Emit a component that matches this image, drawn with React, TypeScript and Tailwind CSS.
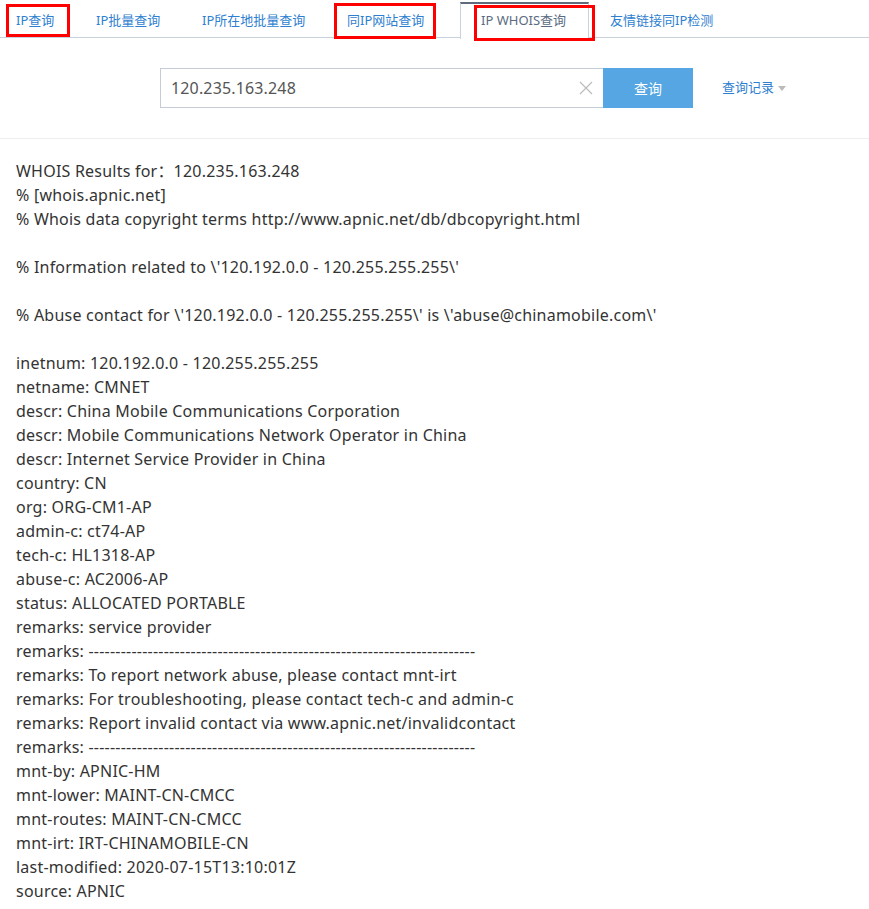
import { useState } from "react";

const tabs = [
  { label: "IP查询", w: "w-[80px]", pl: "pl-4" },
  { label: "IP批量查询", w: "w-[106px]", pl: "pl-4" },
  { label: "IP所在地批量查询", w: "w-[145px]", pl: "pl-4" },
  { label: "同IP网站查询", w: "w-[129px]", pl: "pl-4" },
  { label: "IP WHOIS查询", w: "w-[129px]", pl: "pl-[20px]", active: true },
  { label: "友情链接同IP检测", w: "w-[140px]", pl: "pl-[21px]" },
];

const dashes = "-".repeat(72);

const whoisLines = [
  "WHOIS Results for：120.235.163.248",
  "% [whois.apnic.net]",
  "% Whois data copyright terms http://www.apnic.net/db/dbcopyright.html",
  "",
  "% Information related to \\'120.192.0.0 - 120.255.255.255\\'",
  "",
  "% Abuse contact for \\'120.192.0.0 - 120.255.255.255\\' is \\'abuse@chinamobile.com\\'",
  "",
  "inetnum: 120.192.0.0 - 120.255.255.255",
  "netname: CMNET",
  "descr: China Mobile Communications Corporation",
  "descr: Mobile Communications Network Operator in China",
  "descr: Internet Service Provider in China",
  "country: CN",
  "org: ORG-CM1-AP",
  "admin-c: ct74-AP",
  "tech-c: HL1318-AP",
  "abuse-c: AC2006-AP",
  "status: ALLOCATED PORTABLE",
  "remarks: service provider",
  `remarks: ${dashes}`,
  "remarks: To report network abuse, please contact mnt-irt",
  "remarks: For troubleshooting, please contact tech-c and admin-c",
  "remarks: Report invalid contact via www.apnic.net/invalidcontact",
  `remarks: ${dashes}`,
  "mnt-by: APNIC-HM",
  "mnt-lower: MAINT-CN-CMCC",
  "mnt-routes: MAINT-CN-CMCC",
  "mnt-irt: IRT-CHINAMOBILE-CN",
  "last-modified: 2020-07-15T13:10:01Z",
  "source: APNIC",
];

export default function App() {
  const [ip, setIp] = useState("120.235.163.248");

  return (
    <div className="relative min-h-screen bg-white font-['Noto_Sans','Noto_Sans_CJK_SC',sans-serif] text-[#333]">
      {/* Tabs */}
      <div className="flex h-[38px] border-b border-[#c9d1dc]">
        {tabs.map((t) => (
          <a
            key={t.label}
            href="#"
            className={`${t.w} ${t.pl} flex items-center text-[13px] ${
              t.active
                ? "mt-[2px] h-[37px] border-x border-t-2 border-x-[#c9d1dc] border-t-[#5f6b7c] bg-white pb-[1px] text-[#5b6b82]"
                : "h-[38px] pt-[3px] text-[#2f7fd0]"
            }`}
          >
            {t.label}
          </a>
        ))}
      </div>

      {/* Highlight markers */}
      <div className="pointer-events-none absolute left-[6px] top-[4px] h-[33px] w-[64px] border-[3px] border-[#f00]" />
      <div className="pointer-events-none absolute left-[334px] top-[3px] h-[36px] w-[102px] border-[3px] border-[#f00]" />
      <div className="pointer-events-none absolute left-[474px] top-[5px] h-[36px] w-[121px] border-[3px] border-[#f00]" />

      {/* Search */}
      <div className="flex h-[101px] items-start border-b border-[#eee] pl-[160px] pt-[30px]">
        <div className="flex h-[40px] w-[443px] items-center border border-r-0 border-[#c5ccd8] bg-white">
          <input
            value={ip}
            onChange={(e) => setIp(e.target.value)}
            className="h-full flex-1 bg-transparent pl-[10px] text-[16px] tracking-[0.15px] text-[#555] outline-none"
          />
          <button onClick={() => setIp("")} className="mr-[10px] text-[#bbb]" aria-label="clear">
            <svg width="14" height="14" viewBox="0 0 14 14" stroke="currentColor" strokeWidth="1.2">
              <path d="M1 1l12 12M13 1L1 13" />
            </svg>
          </button>
        </div>
        <button className="h-[40px] w-[90px] bg-[#55a6e2] text-[14px] text-white">查询</button>
        <a href="#" className="ml-[29px] flex h-[40px] items-center text-[13px] text-[#2f7fd0]">
          查询记录
          <span className="ml-[4px] mt-[1px] h-0 w-0 border-x-[4px] border-t-[5px] border-x-transparent border-t-[#bbb]" />
        </a>
      </div>

      {/* Results */}
      <div className="pl-4 pt-5 text-[16px] leading-[24px] tracking-[0.22px]">
        {whoisLines.map((line, i) => (
          <div key={i} className="h-[24px] whitespace-pre">
            {line}
          </div>
        ))}
      </div>
    </div>
  );
}
